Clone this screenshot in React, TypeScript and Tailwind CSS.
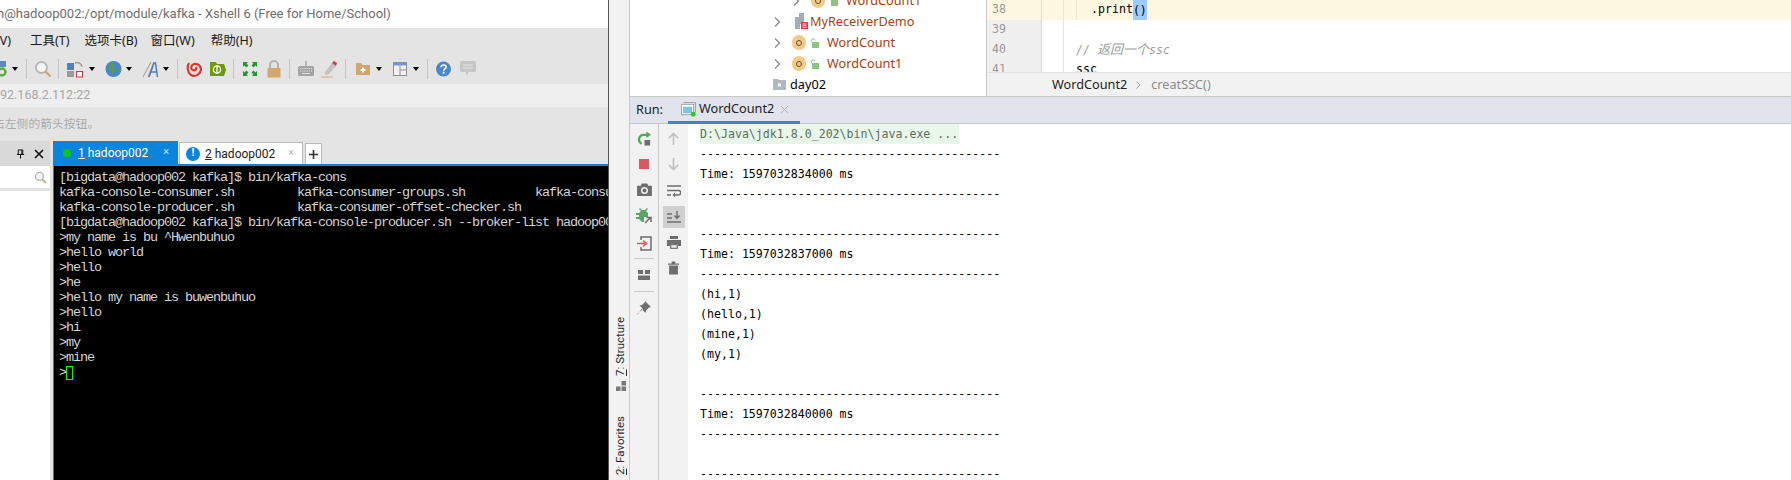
const sans = "font-['Noto_Sans','Noto_Sans_CJK_SC',sans-serif]";
const narrow = "font-['Roboto','Noto_Sans_CJK_SC',sans-serif]";

const terminalLines = [
  "[bigdata@hadoop002 kafka]$ bin/kafka-cons",
  "kafka-console-consumer.sh         kafka-consumer-groups.sh          kafka-consumer-perf-test.sh",
  "kafka-console-producer.sh         kafka-consumer-offset-checker.sh",
  "[bigdata@hadoop002 kafka]$ bin/kafka-console-producer.sh --broker-list hadoop002:9092 --topic first",
  ">my name is bu ^Hwenbuhuo",
  ">hello world",
  ">hello",
  ">he",
  ">hello my name is buwenbuhuo",
  ">hello",
  ">hi",
  ">my",
  ">mine",
];

const dashes = "-------------------------------------------";
const consoleLines = [
  dashes,
  "Time: 1597032834000 ms",
  dashes,
  "",
  dashes,
  "Time: 1597032837000 ms",
  dashes,
  "(hi,1)",
  "(hello,1)",
  "(mine,1)",
  "(my,1)",
  "",
  dashes,
  "Time: 1597032840000 ms",
  dashes,
  "",
  dashes,
];

function Drop() {
  return <span className="w-0 h-0 border-x-[3px] border-x-transparent border-t-[4px] border-t-black" />;
}

function Sep({ className }: { className: string }) {
  return <span className={`w-px h-5 bg-[#c4c4c4] ${className}`} />;
}

function Search({ className }: { className?: string }) {
  return (
    <svg viewBox="0 0 18 18" className={className}>
      <circle cx="7.5" cy="7.5" r="5.5" fill="#f4f4f4" stroke="#b5b5b5" strokeWidth="1.8" />
      <path d="M11.5 11.5l5 5" stroke="#c9a57e" strokeWidth="2.4" />
    </svg>
  );
}

function Toolbar() {
  return (
    <div className="h-[28px] flex items-center overflow-hidden">
      <svg viewBox="0 0 8 16" className="w-[8px] h-4 shrink-0">
        <rect x="-8" y="0" width="14" height="6" fill="#5b8bc5" />
        <circle cx="2" cy="11" r="3.5" fill="none" stroke="#5cab3e" strokeWidth="2.4" />
      </svg>
      <span className="ml-[4px] flex"><Drop /></span>
      <Sep className="ml-[8px]" />
      <Search className="ml-[7px] w-[18px] h-[18px]" />
      <Sep className="ml-[6px]" />
      <svg viewBox="0 0 17 18" className="ml-[8px] w-[17px] h-[18px]">
        <rect x="0" y="3" width="7" height="7" fill="#4a86c5" />
        <rect x="0" y="11" width="7" height="6" fill="#9a9a9a" />
        <rect x="9.5" y="11.5" width="6" height="5.5" fill="#fff" stroke="#d9363e" />
        <path d="M8 3a5 5 0 0 1 7 4" fill="none" stroke="#9a9a9a" strokeWidth="1.4" />
      </svg>
      <span className="ml-[5px] flex"><Drop /></span>
      <svg viewBox="0 0 18 18" className="ml-[10px] w-[17px] h-[18px]">
        <circle cx="9" cy="9" r="8.5" fill="#4a86c9" />
        <path d="M5 3l5 1-1 4 2 3-3 4-2-5-3-2zM13 7l3 1-1 4-2 0z" fill="#5b9a5a" />
      </svg>
      <span className="ml-[4px] flex"><Drop /></span>
      <svg viewBox="0 0 18 18" className="ml-[10px] w-[18px] h-[18px]">
        <path d="M1 17L9 2M6 17L12 2" stroke="#a8a8a8" strokeWidth="1.2" fill="none" />
        <path d="M7 17L12 3h1.5l2 14M9 12h6" stroke="#4a7fc0" strokeWidth="1.5" fill="none" />
      </svg>
      <span className="ml-[3px] flex"><Drop /></span>
      <Sep className="ml-[8px]" />
      <svg viewBox="0 0 16 16" className="ml-[8px] w-[16px] h-[16px]">
        <path d="M3 2C1 5 1 11 5 14c4 2 9 0 10-5 0-4-3-7-7-6-3 1-4 5-1 6 2 1 4-1 3-3" fill="none" stroke="#e0352b" strokeWidth="2.2" />
      </svg>
      <svg viewBox="0 0 16 16" className="ml-[8px] w-[16px] h-[16px]">
        <path d="M0 1h6l1 2h7l2 6-2 6H0z" fill="#6f9a0c" />
        <circle cx="7" cy="8.5" r="3.6" fill="none" stroke="#fff" strokeWidth="1.3" />
        <path d="M7 4v9" stroke="#fff" strokeWidth="1.3" />
      </svg>
      <Sep className="ml-[7px]" />
      <svg viewBox="0 0 14 14" className="ml-[9px] w-[14px] h-[16px]">
        <path d="M0 0h5L3.6 1.6 5.4 3.4 3.4 5.4 1.6 3.6 0 5zM14 0v5l-1.6-1.4-1.8 1.8-2-2 1.8-1.8L9 0zM0 14V9l1.6 1.4 1.8-1.8 2 2-1.8 1.8L5 14zM14 14H9l1.4-1.6-1.8-1.8 2-2 1.8 1.8L14 9z" fill="#1f9a31" />
      </svg>
      <svg viewBox="0 0 14 18" className="ml-[10px] w-[14px] h-[18px]">
        <path d="M3 8V5a4 4 0 0 1 8 0v3" fill="none" stroke="#b3b3b3" strokeWidth="2" />
        <rect x="0.5" y="8" width="13" height="9.5" rx="1" fill="#d2a66f" />
      </svg>
      <Sep className="ml-[8px]" />
      <svg viewBox="0 0 16 16" className="ml-[8px] w-[16px] h-[16px]">
        <path d="M8 0v5" stroke="#8f8f8f" />
        <rect x="0" y="5" width="16" height="10" rx="1.5" fill="#a3a3a3" />
        <path d="M2 7.5h12M2 10h12" stroke="#e4e4e4" strokeDasharray="1.2 1" />
        <path d="M4 12.5h8" stroke="#e4e4e4" />
      </svg>
      <svg viewBox="0 0 17 17" className="ml-[7px] w-[17px] h-[17px]">
        <path d="M4 11L11 2l4 3-7 8-4 1z" fill="#c2c2c2" />
        <path d="M11 2l2-2 3 2-1 3z" fill="#d9363e" />
        <path d="M0 16h12" stroke="#e0b98e" strokeWidth="1.4" />
      </svg>
      <Sep className="ml-[7px]" />
      <svg viewBox="0 0 14 14" className="ml-[10px] w-[14px] h-[14px]">
        <path d="M0 1h5l1.5 2H14v10H0z" fill="#d2a66f" />
        <path d="M7 5.5v5M4.5 8h5" stroke="#fff" strokeWidth="1.8" />
      </svg>
      <span className="ml-[6px] flex"><Drop /></span>
      <svg viewBox="0 0 14 14" className="ml-[11px] w-[14px] h-[14px]">
        <rect x="0.5" y="0.5" width="13" height="13" fill="#f2f2f2" stroke="#8f8f8f" />
        <rect x="0.5" y="0.5" width="13" height="3" fill="#6a9ad0" />
        <path d="M7 3.5v10M7 8h7" stroke="#8f8f8f" />
      </svg>
      <span className="ml-[6px] flex"><Drop /></span>
      <Sep className="ml-[8px]" />
      <svg viewBox="0 0 16 16" className="ml-[8px] w-[15px] h-[16px]">
        <circle cx="8" cy="8" r="8" fill="#4a86c9" />
        <path d="M5.3 6.2C5.4 4.6 6.6 3.7 8.1 3.7c1.6 0 2.7 1 2.7 2.2 0 2-2.6 2-2.6 4" fill="none" stroke="#fff" strokeWidth="1.7" />
        <rect x="7.2" y="11" width="2" height="2" fill="#fff" />
      </svg>
      <svg viewBox="0 0 16 16" className="ml-[9px] w-[16px] h-[16px]">
        <path d="M1.5 0h13A1.5 1.5 0 0 1 16 1.5v8a1.5 1.5 0 0 1-1.5 1.5H9l-3 4v-4H1.5A1.5 1.5 0 0 1 0 9.5v-8A1.5 1.5 0 0 1 1.5 0z" fill="#c6c6c6" />
        <path d="M3 4h10M3 7h10" stroke="#e4e4e4" />
      </svg>
    </div>
  );
}

function Terminal() {
  return (
    <div className="flex-1 bg-black border-l border-[#0a84dc] pl-[5px] pt-[4px] overflow-hidden font-['Liberation_Mono',monospace] text-[13.5px] tracking-[-1.1px] leading-[15px] text-[#d4d4d4] whitespace-pre">
      {terminalLines.map((line, i) => (
        <div key={i} className="h-[15px]">{line}</div>
      ))}
      <div className="h-[15px] flex items-center">
        {">"}
        <span className="w-[7px] h-[14px] border border-[#00ff00]" />
      </div>
    </div>
  );
}

function XshellWindow() {
  return (
    <div className={`w-[608px] shrink-0 h-full flex flex-col bg-[#e4e4e4] overflow-hidden ${sans}`}>
      <div className={`h-[28px] shrink-0 bg-white flex items-center -ml-[3px] text-[13px] text-[#6e6e6e] whitespace-nowrap ${narrow}`}>
        n@hadoop002:/opt/module/kafka - Xshell 6 (Free for Home/School)
      </div>
      <div className="h-[27px] shrink-0 flex items-center -ml-[4px] text-[12.5px] text-[#1a1a1a] whitespace-nowrap">
        <span>(V)</span>
        <span className="ml-[19px]">工具(T)</span>
        <span className="ml-[15px]">选项卡(B)</span>
        <span className="ml-[13px]">窗口(W)</span>
        <span className="ml-[16px]">帮助(H)</span>
      </div>
      <Toolbar />
      <div className={`h-[23px] mt-px shrink-0 bg-[#efefef] flex items-center -ml-[7px] text-[12.5px] text-[#a6a6a6] ${narrow}`}>
        192.168.2.112:22
      </div>
      <div className="h-[34px] shrink-0 flex items-center -ml-[7px] text-[11.8px] text-[#aaaaaa] whitespace-nowrap">
        击左侧的箭头按钮。
      </div>
      <div className="flex-1 flex min-h-0">
        <div className="w-[50px] shrink-0 flex flex-col bg-white">
          <div className="h-[25px] bg-[#d9d9d9] flex items-center justify-end gap-[9px] pr-[6px]">
            <svg viewBox="0 0 10 10" className="w-[9px] h-[10px]">
              <path d="M2.5 0.5h5v5h-5zM1 5.5h8M5 5.5V10M6.5 0.5v5" fill="none" stroke="#111" strokeWidth="1.1" />
            </svg>
            <svg viewBox="0 0 10 10" className="w-[10px] h-[10px]">
              <path d="M1 1l8 8M9 1l-8 8" stroke="#111" strokeWidth="1.6" />
            </svg>
          </div>
          <div className="h-[21px] mt-px flex items-center justify-end pr-[3px]">
            <Search className="w-[13px] h-[13px]" />
          </div>
          <div className="h-[3px] bg-[#e2e2e2]" />
        </div>
        <div className="w-[3px] shrink-0" />
        <div className={`flex-1 min-w-0 flex flex-col ${narrow}`}>
          <div className="h-[23px] shrink-0 flex items-end">
            <div className="w-[125px] h-[23px] bg-[#0a84dc] flex items-center text-[12px] text-white">
              <span className="ml-[10px] w-[8px] h-[8px] rounded-full bg-[#0fc50f]" />
              <span className="ml-[7px]"><span className="underline">1</span> hadoop002</span>
              <span className="ml-auto mr-[9px] text-[11px] text-[#cde6f8]">×</span>
            </div>
            <div className="ml-px w-[124px] h-[22px] bg-white border border-b-0 border-[#b9b9b9] flex items-center text-[12px] text-[#222222]">
              <span className="ml-[6px] w-[14px] h-[14px] rounded-full bg-[#0a84dc] text-white text-[11px] font-bold flex items-center justify-center">!</span>
              <span className="ml-[5px]"><span className="underline">2</span> hadoop002</span>
              <span className="ml-auto mr-[8px] text-[11px] text-[#b5b5b5]">×</span>
            </div>
            <div className="ml-[2px] w-[17px] h-[21px] bg-white border border-b-0 border-[#b9b9b9] flex items-center justify-center">
              <svg viewBox="0 0 9 9" className="w-[9px] h-[9px]">
                <path d="M4.5 0v9M0 4.5h9" stroke="#333" strokeWidth="1.6" />
              </svg>
            </div>
          </div>
          <div className="h-[2px] shrink-0 bg-[#0a84dc]" />
          <Terminal />
        </div>
      </div>
    </div>
  );
}

function Chevron() {
  return (
    <svg viewBox="0 0 7 10" className="w-[7px] h-[10px] shrink-0">
      <path d="M1 0.5L5.5 5 1 9.5" fill="none" stroke="#8c8c8c" strokeWidth="1.4" />
    </svg>
  );
}

function ClassBadge() {
  return (
    <>
      <span className="ml-[11px] w-[14px] h-[15px] rounded-full bg-[#f6c987] flex items-center justify-center">
        <span className="w-[6px] h-[6px] rounded-full border border-[#5c5141]" />
      </span>
      <svg viewBox="0 0 9 10" className="ml-[4px] w-[9px] h-[10px]">
        <path d="M1.5 4V2.5a1.7 1.7 0 0 1 3.4 0" fill="none" stroke="#8fc47e" strokeWidth="1" />
        <rect x="2" y="4" width="7" height="6" fill="#8fc47e" />
      </svg>
    </>
  );
}

function ProjectTree() {
  const itemText = "text-[12.7px] text-[#a8410f] leading-none";
  return (
    <div className={`w-[356px] shrink-0 h-full bg-white overflow-hidden ${sans}`}>
      <div className="-mt-[10px] flex flex-col">
        <div className="h-[21px] flex items-center pl-[163px]">
          <Chevron />
          <ClassBadge />
          <span className={`ml-[8px] ${itemText}`}>WordCount1</span>
        </div>
        <div className="h-[21px] flex items-center pl-[144px]">
          <Chevron />
          <svg viewBox="0 0 13 17" className="ml-[14px] w-[13px] h-[17px]">
            <path d="M0 4h4V0h5v11H5v5H0z" fill="#a3adb5" />
            <rect x="6" y="9" width="7" height="7" fill="#e5353c" />
            <path d="M7.5 11h4M7.5 12.7h4M7.5 14.4h4" stroke="#fff" strokeWidth="0.8" />
          </svg>
          <span className={`ml-[2px] ${itemText}`}>MyReceiverDemo</span>
        </div>
        {["WordCount", "WordCount1"].map((name) => (
          <div key={name} className="h-[21px] flex items-center pl-[144px]">
            <Chevron />
            <ClassBadge />
            <span className={`ml-[8px] ${itemText}`}>{name}</span>
          </div>
        ))}
        <div className="h-[21px] flex items-center pl-[143px]">
          <svg viewBox="0 0 13 11" className="w-[13px] h-[11px]">
            <path d="M0 0h5l1 1h7v10H0z" fill="#aeb9c0" />
            <rect x="5" y="4.5" width="3" height="3" fill="#fff" />
          </svg>
          <span className="ml-[4px] text-[12.7px] text-black leading-none">day02</span>
        </div>
      </div>
    </div>
  );
}

function EditorRow({ num, active, children }: { num: number; active?: boolean; children?: React.ReactNode }) {
  return (
    <div className={`h-[20px] shrink-0 flex items-center ${active ? "bg-[#fef8e2]" : ""}`}>
      <span className={`w-[55px] h-full pl-[5px] flex items-center text-[#999999] border-r border-[#dcdcdc] ${active ? "" : "bg-[#f0f0f0]"}`}>
        {num}
      </span>
      <span className={`w-[22px] h-full border-r ${active ? "border-[#efe9d2]" : "border-[#e6e6e6]"}`} />
      {children}
    </div>
  );
}

function Editor() {
  return (
    <div className="flex-1 min-w-0 h-full flex flex-col border-l border-[#c9c9c9] bg-white overflow-hidden">
      <div className="h-[72px] overflow-hidden font-['DejaVu_Sans_Mono','Noto_Sans_CJK_SC',monospace] text-[11.6px] text-black">
        <EditorRow num={38} active>
          <span className="ml-[12px] h-full border-l border-[#efe9d2] pl-[14px] flex items-center">
            .print<span className="h-[20px] leading-[20px] bg-[#9dcbff]">()</span>
          </span>
        </EditorRow>
        <EditorRow num={39} />
        <EditorRow num={40}>
          <span className="ml-[12px] italic text-[#9c9c9c]">// <span className="text-[13px]">返回一个</span>ssc</span>
        </EditorRow>
        <EditorRow num={41}>
          <span className="ml-[12px]">ssc</span>
        </EditorRow>
      </div>
      <div className={`h-[24px] shrink-0 bg-[#f2f2f2] border-t border-[#e2e2e2] flex items-center pl-[65px] text-[12.7px] ${sans}`}>
        <span className="text-[#222222]">WordCount2</span>
        <svg viewBox="0 0 5 8" className="ml-[9px] w-[5px] h-[8px]">
          <path d="M0.5 0.5L4 4 0.5 7.5" fill="none" stroke="#a0a0a0" />
        </svg>
        <span className="ml-[10px] text-[#8c8c8c]">creatSSC()</span>
      </div>
    </div>
  );
}

function RunTools() {
  return (
    <div className="w-[29px] shrink-0 border-r border-[#c9c9c9] bg-[#f2f2f2] flex flex-col items-center pt-[7px]">
      <svg viewBox="0 0 16 16" className="w-[15px] h-[16px] shrink-0">
        <path d="M12 3.5H7a5 5 0 0 0-2 9.5" fill="none" stroke="#4fa860" strokeWidth="2.4" />
        <path d="M10 0l5 3.5L10 7z" fill="#4fa860" />
        <rect x="8" y="9" width="6" height="6" fill="#6e6e6e" />
      </svg>
      <span className="mt-[12px] w-[10px] h-[10px] bg-[#db5860] shrink-0" />
      <svg viewBox="0 0 16 14" className="mt-[14px] w-[15px] h-[13px] shrink-0">
        <path d="M0 3h4l1-2.5h6L12 3h4v11H0z" fill="#6e6e6e" />
        <circle cx="8" cy="8" r="3" fill="none" stroke="#f2f2f2" strokeWidth="1.6" />
      </svg>
      <svg viewBox="0 0 16 16" className="mt-[12px] w-[16px] h-[16px] shrink-0">
        <path d="M4 0l2 2h3l2-2 1 1-2 2 2 2v4H8v5H6l-3-3V5l2-2-2-2zM0 5h3v2H0zM0 9h3v2H0z" fill="#59a869" />
        <path d="M9 15l5-5M10.5 9.5H15V14" fill="none" stroke="#6e6e6e" strokeWidth="1.5" />
      </svg>
      <svg viewBox="0 0 15 15" className="mt-[12px] w-[15px] h-[15px] shrink-0">
        <path d="M4 4V1h10v13H4v-3" fill="none" stroke="#6e6e6e" strokeWidth="1.5" />
        <path d="M0 7.5h8M6 4.5l3.5 3-3.5 3" fill="none" stroke="#db5860" strokeWidth="1.6" />
      </svg>
      <span className="mt-[7px] w-[20px] h-px bg-[#c9c9c9] shrink-0" />
      <svg viewBox="0 0 12 10" className="mt-[11px] w-[12px] h-[10px] shrink-0">
        <path d="M0 0h5v4H0zM7 0h5v4H7zM0 5.5h12V10H0z" fill="#6e6e6e" />
      </svg>
      <span className="mt-[11px] w-[20px] h-px bg-[#c9c9c9] shrink-0" />
      <svg viewBox="0 0 14 14" className="mt-[9px] w-[14px] h-[14px] shrink-0">
        <path d="M8 0l6 6-2 .5-3 3-.5 2.5L4.5 8 .5 13.5 0 13l6-5-3.5-3.5L5 4l3-3z" fill="#6e6e6e" />
      </svg>
    </div>
  );
}

function ConsoleTools() {
  return (
    <div className="w-[29px] shrink-0 bg-[#f2f2f2] flex flex-col items-center pt-[8px]">
      <svg viewBox="0 0 12 14" className="w-[11px] h-[13px] shrink-0">
        <path d="M6 14V1.5M1 6.5l5-5 5 5" fill="none" stroke="#c2c2c2" strokeWidth="1.8" />
      </svg>
      <svg viewBox="0 0 12 14" className="mt-[13px] w-[11px] h-[13px] shrink-0">
        <path d="M6 0v12.5M1 7.5l5 5 5-5" fill="none" stroke="#c2c2c2" strokeWidth="1.8" />
      </svg>
      <svg viewBox="0 0 14 12" className="mt-[14px] w-[14px] h-[12px] shrink-0">
        <path d="M0 1h14M0 5.5h11.5a2.2 2.2 0 0 1 0 4.5H7M0 10h4" fill="none" stroke="#6e6e6e" strokeWidth="1.4" />
        <path d="M8 7.5L5.5 10 8 12.5z" fill="#6e6e6e" />
      </svg>
      <span className="mt-[9px] w-[22px] h-[22px] bg-[#d0d0d0] flex items-center justify-center shrink-0">
        <svg viewBox="0 0 14 12" className="w-[14px] h-[12px]">
          <path d="M0 3h5M0 7h5M0 11h14M10 0v7M7.5 4.5L10 7.5l2.5-3" fill="none" stroke="#6e6e6e" strokeWidth="1.4" />
        </svg>
      </span>
      <svg viewBox="0 0 14 13" className="mt-[8px] w-[14px] h-[13px] shrink-0">
        <path d="M3 0h8v3H3zM0 4h14v6h-3V8H3v2H0z" fill="#6e6e6e" />
        <rect x="3.7" y="8.7" width="6.6" height="3.6" fill="none" stroke="#6e6e6e" strokeWidth="1.2" />
      </svg>
      <svg viewBox="0 0 12 14" className="mt-[12px] w-[11px] h-[14px] shrink-0">
        <path d="M0 2h12v1.4H0zM4 0h4v2H4zM1.2 4.2h9.6V14H1.2z" fill="#6e6e6e" />
      </svg>
    </div>
  );
}

function Console() {
  return (
    <div className="flex-1 min-w-0 bg-white pl-[12px] overflow-hidden font-['DejaVu_Sans_Mono',monospace] text-[11.6px] leading-[20px] text-black whitespace-pre">
      <div className="h-[20px] w-[259px] bg-[#e9f6ea] text-[#5d705d]">{"D:\\Java\\jdk1.8.0_202\\bin\\java.exe ..."}</div>
      {consoleLines.map((line, i) => (
        <div key={i} className="h-[20px]">{line}</div>
      ))}
    </div>
  );
}

function IdeaWindow() {
  return (
    <div className="flex-1 min-w-0 h-full flex border-l border-[#555555]">
      <div className={`w-[21px] shrink-0 bg-[#f2f2f2] border-r border-[#c9c9c9] flex flex-col items-center justify-end pl-[4px] pb-[5px] text-[11.5px] text-[#2b2b2b] ${narrow}`}>
        <span className="[writing-mode:vertical-rl] rotate-180 leading-none"><span className="underline">7</span>: Structure</span>
        <svg viewBox="0 0 10 10" className="mt-[5px] w-[10px] h-[10px] shrink-0">
          <path d="M5.5 0h4.5v4.5H5.5zM0 5.5h4.5V10H0zM5.5 5.5h4.5V10H5.5z" fill="#7a7a7a" />
        </svg>
        <span className="mt-[25px] [writing-mode:vertical-rl] rotate-180 leading-none"><span className="underline">2</span>: Favorites</span>
      </div>
      <div className="flex-1 min-w-0 flex flex-col">
        <div className="h-[96px] shrink-0 flex">
          <ProjectTree />
          <Editor />
        </div>
        <div className={`h-[28px] shrink-0 bg-[#e1e4ec] border-y border-[#c9c9c9] flex items-stretch text-[12.7px] text-[#222222] ${sans}`}>
          <span className="ml-[6px] w-[32px] flex items-center">Run:</span>
          <div className="w-[132px] flex items-center border-b-[3px] border-[#4083c9] -mb-px">
            <svg viewBox="0 0 16 16" className="ml-[13px] w-[15px] h-[15px]">
              <path d="M2.5 0.5h13v11" fill="none" stroke="#9aa0a6" />
              <rect x="0.5" y="2.5" width="13" height="11" fill="#fff" stroke="#9aa0a6" />
              <rect x="2" y="5" width="10" height="7" fill="#7fc5e5" />
              <circle cx="13" cy="13" r="2.6" fill="#1fd01f" />
            </svg>
            <span className="ml-[3px]">WordCount2</span>
            <svg viewBox="0 0 9 9" className="ml-[6px] w-[9px] h-[9px]">
              <path d="M1 1l7 7M8 1L1 8" stroke="#b0b3b8" />
            </svg>
          </div>
        </div>
        <div className="flex-1 min-h-0 flex">
          <RunTools />
          <ConsoleTools />
          <Console />
        </div>
      </div>
    </div>
  );
}

export default function App() {
  return (
    <div className="w-[1791px] h-[480px] flex overflow-hidden bg-white">
      <XshellWindow />
      <IdeaWindow />
    </div>
  );
}
